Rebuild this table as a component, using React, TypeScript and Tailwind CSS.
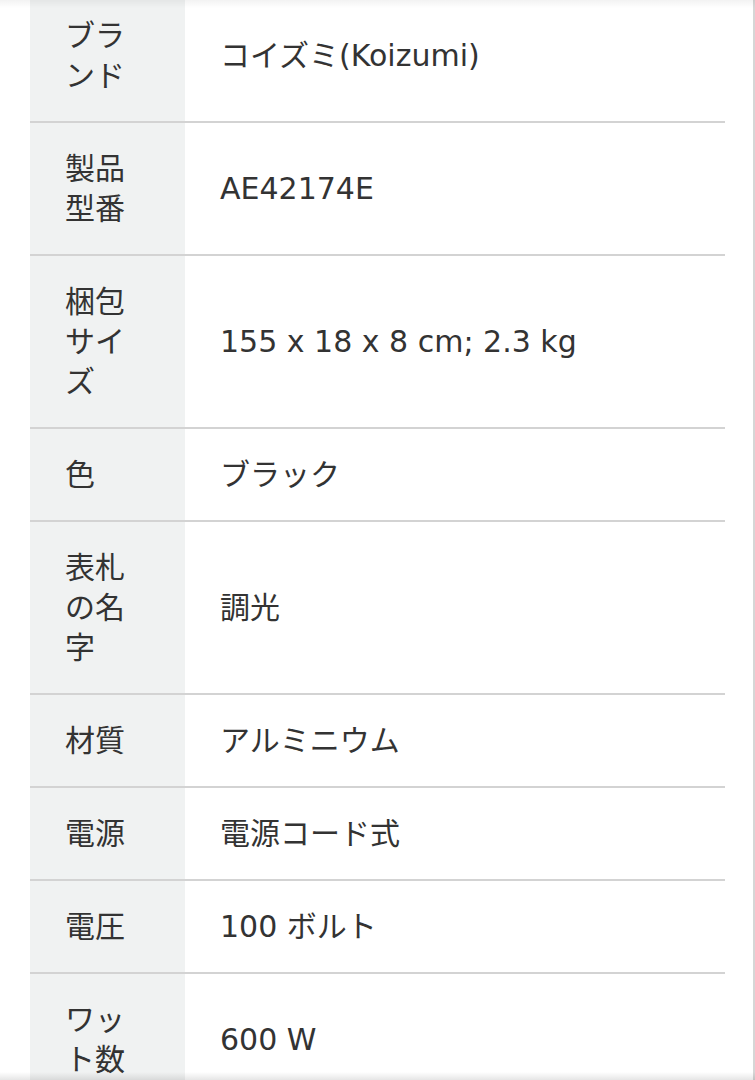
const rows: { label: string; value: string }[] = [
  { label: "ブランド", value: "コイズミ(Koizumi)" },
  { label: "製品型番", value: "AE42174E" },
  { label: "梱包サイズ", value: "155 x 18 x 8 cm; 2.3 kg" },
  { label: "色", value: "ブラック" },
  { label: "表札の名字", value: "調光" },
  { label: "材質", value: "アルミニウム" },
  { label: "電源", value: "電源コード式" },
  { label: "電圧", value: "100 ボルト" },
  { label: "ワット数", value: "600 W" },
];

export default function App() {
  return (
    <div
      className="relative h-[1080px] w-[755px] overflow-hidden bg-white text-[30px] leading-[40px] text-[#333]"
      style={{ fontFamily: '"DejaVu Sans", "Noto Sans CJK JP", sans-serif' }}
    >
      <div className="flex h-full">
        <div className="w-[30px] shrink-0" />
        <div className="w-[695px] shrink-0">
          {rows.map((row, i) => (
            <div key={row.label} className="flex border-b-2 border-[#d3d3d3]">
              <div
                className={`w-[155px] shrink-0 bg-[#f0f2f2] pl-[35px] pr-[45px] pb-[25px] ${
                  i === 0 ? "pt-[16px]" : "pt-[26px]"
                }`}
                style={{ lineBreak: "strict" }}
              >
                {row.label}
              </div>
              <div
                className={`flex flex-1 items-center pl-[35px] pb-[25px] ${
                  i === 0 ? "pt-[16px]" : "pt-[26px]"
                }`}
              >
                {row.value}
              </div>
            </div>
          ))}
        </div>
        <div className="flex-1 border-r-2 border-[#d6d6d6]" />
      </div>
      <div className="pointer-events-none absolute inset-x-0 top-0 h-[8px] bg-gradient-to-b from-black/5 to-transparent" />
      <div className="pointer-events-none absolute inset-x-0 bottom-0 h-[8px] bg-gradient-to-t from-black/10 to-transparent" />
    </div>
  );
}
